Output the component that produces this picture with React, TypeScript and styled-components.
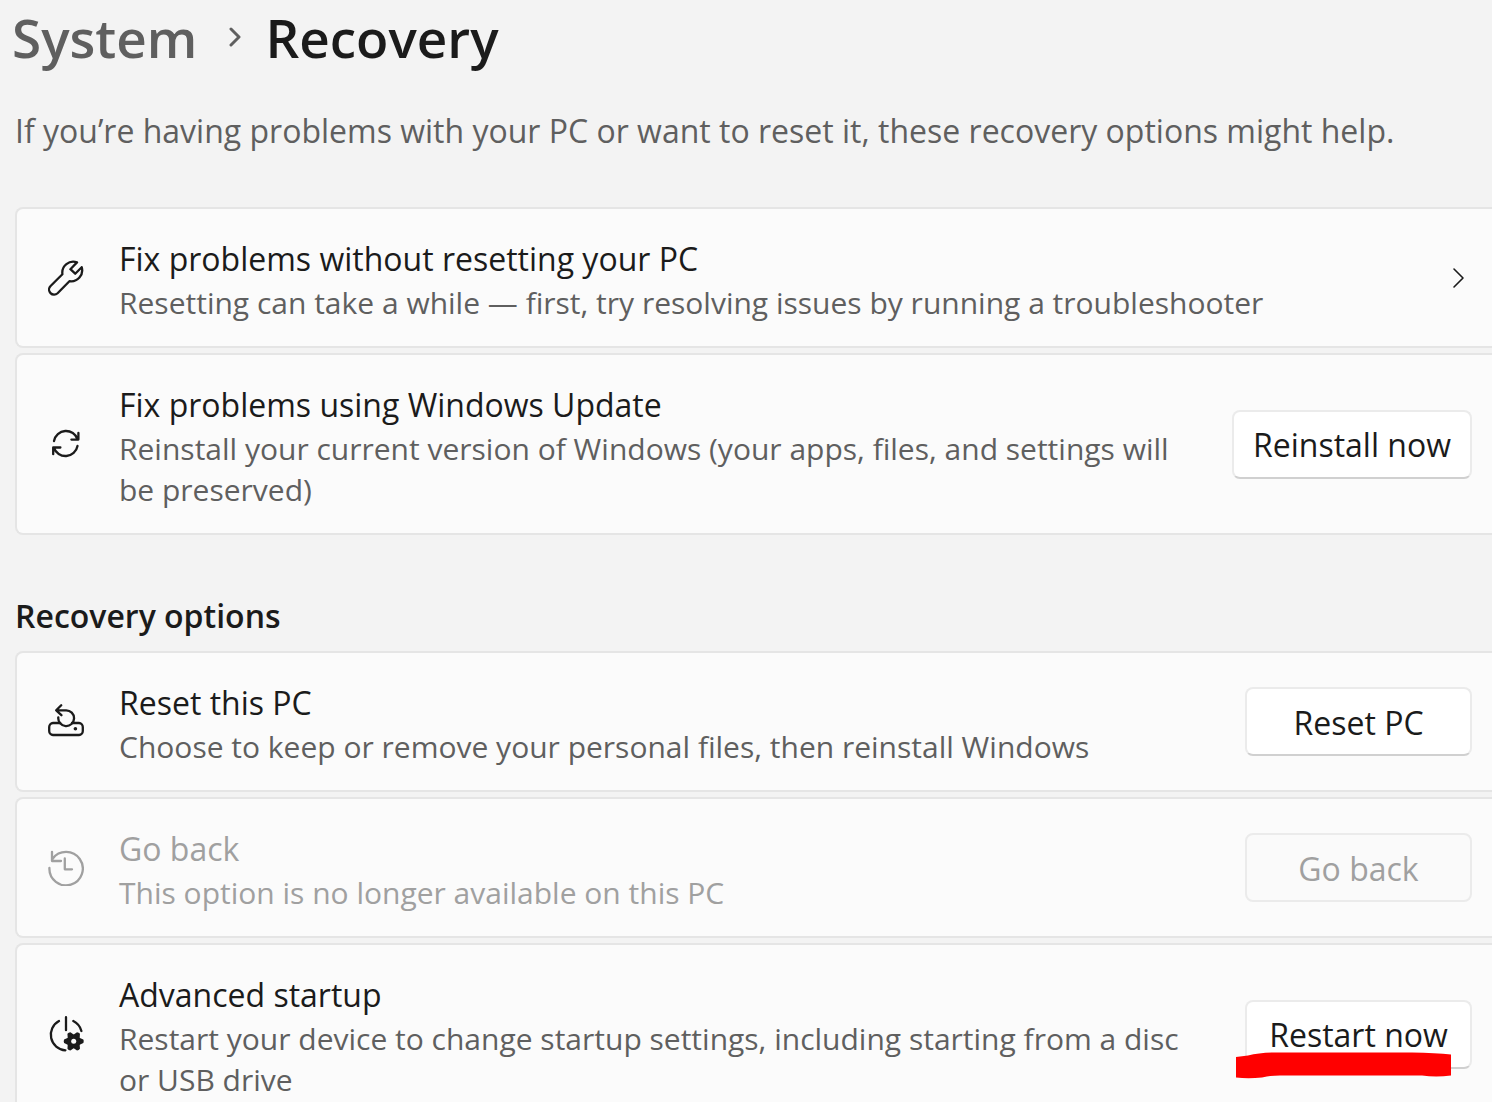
import React from "react";
import styled, { createGlobalStyle } from "styled-components";

const GlobalStyle = createGlobalStyle`
  * { box-sizing: border-box; }
  html, body { margin: 0; background: #f3f3f3; }
  body {
    overflow: hidden;
    font-family: "Segoe UI", "Open Sans", "Noto Sans", sans-serif;
    color: #1b1b1b;
  }
  h1, h2, h3, p, ol, ul { margin: 0; padding: 0; font-weight: 400; }
`;

const Page = styled.main`
  padding-left: 15px;
  height: 100vh;
  overflow: hidden;
`;

const Breadcrumb = styled.nav`
  display: flex;
  align-items: center;
  gap: 24px;
  margin-left: -3px;
  font-size: 53px;
  line-height: 76px;
  font-weight: 600;
`;

const Crumb = styled.a`
  color: #5f5f5f;
  text-decoration: none;
`;

const PageTitle = styled.h1`
  font-size: inherit;
  font-weight: 600;
`;

const Intro = styled.p`
  margin-top: 31px;
  font-size: 32px;
  line-height: 48px;
  color: #5f5f5f;
  white-space: nowrap;
`;

const SectionTitle = styled.h2`
  margin-top: 57px;
  font-size: 32px;
  line-height: 48px;
  font-weight: 600;
`;

const CardList = styled.ul<{ $gap: number }>`
  display: flex;
  flex-direction: column;
  gap: 5px;
  margin-top: ${(p) => p.$gap}px;
  list-style: none;
`;

const Card = styled.li<{ $disabled?: boolean }>`
  display: flex;
  align-items: center;
  padding: 23px 20px 23px 31px;
  border: 2px solid #e5e5e5;
  border-right: 0;
  border-radius: 8px 0 0 8px;
  background: #fbfbfb;
  color: ${(p) => (p.$disabled ? "#a0a0a0" : "#1b1b1b")};
`;

const CardText = styled.div`
  flex: 1;
  min-width: 0;
  margin: 0 40px 0 35px;
  padding-top: 4px;
`;

const CardTitle = styled.h3`
  font-size: 32px;
  line-height: 46px;
`;

const CardDescription = styled.p<{ $disabled?: boolean }>`
  font-size: 30px;
  line-height: 41px;
  color: ${(p) => (p.$disabled ? "#a0a0a0" : "#5f5f5f")};
`;

const Icon = styled.svg`
  flex: none;
  width: 36px;
  height: 36px;
  fill: none;
  stroke: currentColor;
  stroke-width: 2.3;
  stroke-linecap: round;
  stroke-linejoin: round;
`;

const Chevron = styled.svg<{ $weight: number }>`
  display: block;
  flex: none;
  width: 20px;
  height: 24px;
  fill: none;
  stroke: currentColor;
  stroke-width: ${(p) => p.$weight};
  stroke-linecap: round;
  stroke-linejoin: round;
`;

const ChevronButton = styled.button`
  padding: 0;
  border: 0;
  background: none;
  color: inherit;
`;

const ActionWrap = styled.div`
  position: relative;
  flex: none;
`;

const Action = styled.button`
  display: block;
  min-width: 227px;
  height: 69px;
  padding: 2px 19px 0;
  border: 2px solid #ebebeb;
  border-bottom-color: #d0d0d0;
  border-radius: 8px;
  background: #ffffff;
  color: #1b1b1b;
  font: inherit;
  font-size: 32px;
  line-height: 46px;

  &:disabled {
    border-color: #ebebeb;
    background: #fafafa;
    color: #a0a0a0;
  }
`;

const MarkerStroke = styled.svg`
  position: absolute;
  left: -9px;
  top: 52px;
  width: 216px;
  height: 28px;
  pointer-events: none;
`;

const WrenchIcon = () => (
  <Icon viewBox="0 0 36 36" aria-hidden="true">
    <path d="M29 2.4 A11 11 0 0 0 14.4 14.2 L2.6 26 A4.9 4.9 0 0 0 9.6 33.2 L21.4 21.2 A11 11 0 0 0 33.7 7.2 L27.2 13.7 L22.4 9.2 Z" />
  </Icon>
);

const SyncIcon = () => (
  <Icon viewBox="0 0 36 36" aria-hidden="true">
    <path d="M6 15 A12.2 12.2 0 0 1 29.6 13.4 M30.4 7 V13.6 H23.4 M29.5 20 A12.2 12.2 0 0 1 5.9 21.6 M5.2 28.2 V21.5 H12.4" />
  </Icon>
);

const ResetIcon = () => (
  <Icon viewBox="0 0 36 36" aria-hidden="true">
    <path d="M10.3 13.4 A7.9 7.9 0 1 0 18 6.3 H8.2 M13.2 1.3 L8.2 6.3 L13.4 11.2" />
    <path d="M12.2 19 H5 A4 4 0 0 0 1.2 23 V27 A4 4 0 0 0 5 31 H31 A4 4 0 0 0 34.8 27 V23 A4 4 0 0 0 31 19 H24" />
    <circle cx="27.4" cy="24.8" r="1.8" fill="currentColor" stroke="none" />
  </Icon>
);

const HistoryIcon = () => (
  <Icon viewBox="0 0 36 36" aria-hidden="true">
    <path d="M1.4 18 A16.7 16.7 0 1 0 4.6 8.8 M4 1.8 V11 H13 M16.8 8.4 V19.3 H24" />
  </Icon>
);

const toothAngles = [0, 60, 120, 180, 240, 300];

const StartupIcon = () => (
  <Icon viewBox="0 0 36 36" aria-hidden="true">
    <path d="M18 1.2 V14.2 M11 5 A15.6 15.6 0 0 0 17.4 34.3 M25.3 5 A15.6 15.6 0 0 1 33.4 15" />
    <g transform="translate(25.7 25.3)" stroke="none" fill="currentColor">
      {toothAngles.map((angle) => (
        <path key={angle} transform={`rotate(${angle})`} d="M4 -4.4 L9.6 -1.7 Q10.4 0 9.6 1.7 L4 4.4 Z" />
      ))}
      <circle r="6.2" />
      <circle r="2.5" fill="#fbfbfb" />
    </g>
  </Icon>
);

interface SettingProps {
  icon: React.ReactNode;
  title: string;
  description: string;
  disabled?: boolean;
  children: React.ReactNode;
}

const Setting = ({ icon, title, description, disabled, children }: SettingProps) => (
  <Card $disabled={disabled}>
    {icon}
    <CardText>
      <CardTitle>{title}</CardTitle>
      <CardDescription $disabled={disabled}>{description}</CardDescription>
    </CardText>
    {children}
  </Card>
);

export default function App() {
  return (
    <>
      <GlobalStyle />
      <Page>
        <Breadcrumb aria-label="Breadcrumb">
          <Crumb href="#system">System</Crumb>
          <Chevron viewBox="0 0 20 24" $weight={3} color="#5f5f5f" aria-hidden="true">
            <path d="M10 3 L18 11 L10 19" />
          </Chevron>
          <PageTitle>Recovery</PageTitle>
        </Breadcrumb>
        <Intro>
          If you’re having problems with your PC or want to reset it, these recovery options might help.
        </Intro>

        <CardList $gap={52}>
          <Setting
            icon={<WrenchIcon />}
            title="Fix problems without resetting your PC"
            description="Resetting can take a while — first, try resolving issues by running a troubleshooter"
          >
            <ChevronButton aria-label="Open troubleshooters">
              <Chevron viewBox="0 0 20 24" $weight={1.6} aria-hidden="true">
                <path d="M2 3 L11 12 L2 21" />
              </Chevron>
            </ChevronButton>
          </Setting>
          <Setting
            icon={<SyncIcon />}
            title="Fix problems using Windows Update"
            description="Reinstall your current version of Windows (your apps, files, and settings will be preserved)"
          >
            <Action>Reinstall now</Action>
          </Setting>
        </CardList>

        <SectionTitle>Recovery options</SectionTitle>
        <CardList $gap={11}>
          <Setting
            icon={<ResetIcon />}
            title="Reset this PC"
            description="Choose to keep or remove your personal files, then reinstall Windows"
          >
            <Action>Reset PC</Action>
          </Setting>
          <Setting
            icon={<HistoryIcon />}
            title="Go back"
            description="This option is no longer available on this PC"
            disabled
          >
            <Action disabled>Go back</Action>
          </Setting>
          <Setting
            icon={<StartupIcon />}
            title="Advanced startup"
            description="Restart your device to change startup settings, including starting from a disc or USB drive"
          >
            <ActionWrap>
              <Action>Restart now</Action>
              <MarkerStroke viewBox="0 0 216 28" aria-hidden="true">
                <path
                  fill="#ff0000"
                  d="M0 5 L12 3.5 Q24 0.5 40 0.5 H176 Q200 1 215 2.5 V23.5 Q200 25.5 186 23.5 H44 Q34 23.5 26 25.5 Q12 26.8 0 25.5 Z"
                />
              </MarkerStroke>
            </ActionWrap>
          </Setting>
        </CardList>
      </Page>
    </>
  );
}
